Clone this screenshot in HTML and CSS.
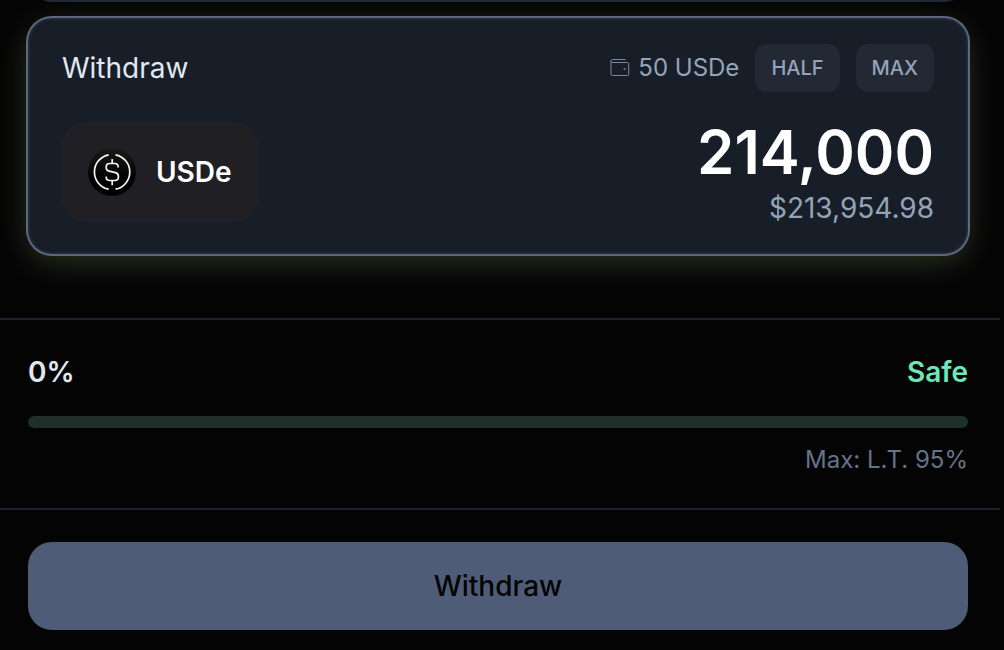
FILE: index.html
```html
<!DOCTYPE html>
<html lang="en">
<head>
    <meta charset="UTF-8">
    <meta name="viewport" content="width=device-width, initial-scale=1">
    <title>Withdraw USDe</title>
    <link rel="stylesheet" href="styles.css">
</head>
<body>
    <main class="panel">
        <div class="cards">
            <div class="card card-prev"></div>

            <section class="card card-active">
                <div class="card-header">
                    <label class="card-title" for="amount">Withdraw</label>
                    <div class="balance">
                        <svg class="wallet-icon" viewBox="0 0 20 20" fill="none" stroke="currentColor">
                            <path d="M15.5 1.5H3C1.700 1.5 1 2.200 1 3S1.700 4.500 3 4.500h14.500q1.200 0 1.200 1.200v10.600q0 1.200-1.200 1.200h-15Q1 17.500 1 16V3"/>
                            <circle cx="14.500" cy="11" r="1" fill="currentColor" stroke="none"/>
                        </svg>
                        <span class="balance-text">50 USDe</span>
                        <button type="button" class="chip">HALF</button>
                        <button type="button" class="chip">MAX</button>
                    </div>
                </div>

                <div class="card-body">
                    <button type="button" class="token">
                        <svg class="token-icon" viewBox="0 0 48 48" fill="none" stroke="#f4f4f4" stroke-width="1.700">
                            <defs>
                                <linearGradient id="coin" x1="0" y1="0" x2="0" y2="1">
                                    <stop offset="0" stop-color="#1a1a1b"/>
                                    <stop offset="0.600" stop-color="#030303"/>
                                    <stop offset="1" stop-color="#000"/>
                                </linearGradient>
                            </defs>
                            <circle cx="24" cy="24" r="24" fill="url(#coin)" stroke="none"/>
                            <path d="M20.700 6.800a17.500 17.500 0 0 0 0 34.400M27.500 6.800a17.500 17.500 0 0 1 0 34.400"/>
                            <path d="M30.200 19.500v-.5q0-3.500-3.500-3.500h-5q-3.500 0-3.500 3.500v.8q0 2.800 3 3.400l6.200 1.400q3 .700 3 3.600v.8q0 3.500-3.500 3.500h-5.200q-3.500 0-3.500-3.500V28.500M24.200 11v4.500M24.200 32.500v4.700"/>
                        </svg>
                        USDe
                    </button>
                    <div class="amount">
                        <input class="amount-input" id="amount" type="text" inputmode="decimal" value="214,000">
                        <div class="amount-usd">$213,954.98</div>
                    </div>
                </div>
            </section>
        </div>

        <section class="risk">
            <div class="risk-row">
                <span class="risk-value">0%</span>
                <span class="risk-status">Safe</span>
            </div>
            <div class="risk-bar"></div>
            <div class="risk-max">Max: L.T. 95%</div>
        </section>

        <div class="actions">
            <button type="button" class="submit">Withdraw</button>
        </div>
    </main>
</body>
</html>
```

FILE: styles.css
```css
* {
    box-sizing: border-box;
}

body {
    margin: 0;
    background: #040405;
    color: #e2e8f0;
    font-family: Inter, "Liberation Sans", sans-serif;
    font-size: 28px;
    line-height: 40px;
    overflow: hidden;
}

button,
input {
    margin: 0;
    border: 0;
    font-family: inherit;
}

button {
    cursor: pointer;
}

.panel {
    margin-right: 4px;
}

/* cards */
.cards {
    padding: 0 32px 64px 28px;
}

.card {
    background: #181e28;
    border: 2px solid #1f2937;
    border-radius: 24px;
}

.card-prev {
    height: 64px;
    margin-top: -62px;
    margin-bottom: 16px;
}

.card-active {
    padding: 24px 32px;
    box-shadow: 0 0 0 2px #5d6880, 0 8px 32px rgba(190, 215, 130, 0.22);
}

.card-header,
.card-body {
    display: flex;
    align-items: center;
    justify-content: space-between;
}

.card-header {
    margin-bottom: 24px;
}

.balance {
    display: flex;
    align-items: center;
    gap: 16px;
    color: #94a3b8;
    font-size: 24px;
}

.wallet-icon {
    width: 20px;
    height: 20px;
    margin-right: -8px;
    opacity: 0.8;
}

.chip {
    height: 48px;
    padding: 0 16px;
    border-radius: 12px;
    background: #222834;
    color: #94a3b8;
    font-size: 20px;
    font-weight: 500;
}

.token {
    display: flex;
    align-items: center;
    gap: 20px;
    height: 100px;
    padding: 0 24px;
    border: 2px solid #1f222b;
    border-radius: 24px;
    background: #202024;
    color: #fff;
    font-size: 28px;
    font-weight: 600;
}

.token-icon {
    width: 48px;
    height: 48px;
}

.amount {
    flex: 1;
    min-width: 0;
    text-align: right;
}

.amount-input {
    display: block;
    width: 100%;
    height: 72px;
    padding: 0;
    background: transparent;
    color: #fff;
    font-size: 60px;
    font-weight: 600;
    text-align: right;
    outline: none;
}

.amount-usd {
    color: #94a3b8;
}

/* risk */
.risk {
    padding: 32px 32px 28px 28px;
    border-top: 2px solid #1c222c;
    border-bottom: 2px solid #1c222c;
}

.risk-row {
    display: flex;
    justify-content: space-between;
    margin-bottom: 24px;
    font-weight: 600;
}

.risk-status {
    color: #6ee7b7;
}

.risk-bar {
    height: 12px;
    margin-bottom: 12px;
    border-radius: 6px;
    background: #1e3029;
}

.risk-max {
    color: #64748b;
    font-size: 24px;
    text-align: right;
}

/* actions */
.actions {
    padding: 32px 32px 20px 28px;
}

.submit {
    width: 100%;
    height: 88px;
    border-radius: 24px;
    background: #4f5c78;
    color: #040405;
    font-size: 28px;
    font-weight: 500;
}
```
